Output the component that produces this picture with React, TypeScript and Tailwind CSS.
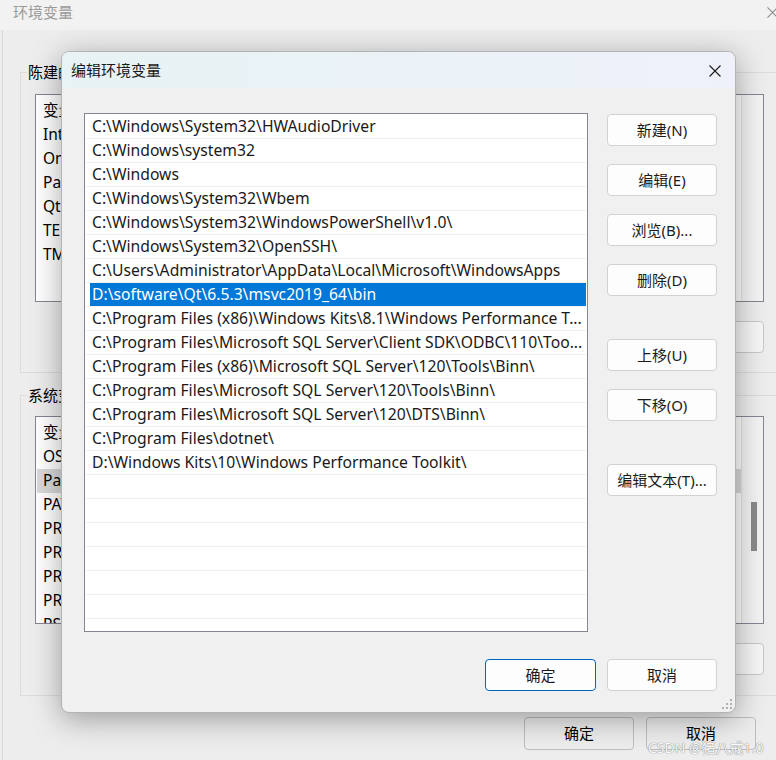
import React from "react";

const FONT = "font-['Noto_Sans','Noto_Sans_CJK_SC',sans-serif]";

const paths = [
  "C:\\Windows\\System32\\HWAudioDriver",
  "C:\\Windows\\system32",
  "C:\\Windows",
  "C:\\Windows\\System32\\Wbem",
  "C:\\Windows\\System32\\WindowsPowerShell\\v1.0\\",
  "C:\\Windows\\System32\\OpenSSH\\",
  "C:\\Users\\Administrator\\AppData\\Local\\Microsoft\\WindowsApps",
  "D:\\software\\Qt\\6.5.3\\msvc2019_64\\bin",
  "C:\\Program Files (x86)\\Windows Kits\\8.1\\Windows Performance T...",
  "C:\\Program Files\\Microsoft SQL Server\\Client SDK\\ODBC\\110\\Too...",
  "C:\\Program Files (x86)\\Microsoft SQL Server\\120\\Tools\\Binn\\",
  "C:\\Program Files\\Microsoft SQL Server\\120\\Tools\\Binn\\",
  "C:\\Program Files\\Microsoft SQL Server\\120\\DTS\\Binn\\",
  "C:\\Program Files\\dotnet\\",
  "D:\\Windows Kits\\10\\Windows Performance Toolkit\\",
];

function BgList({
  items,
  selected,
  thumb,
}: {
  items: string[];
  selected?: number;
  thumb?: boolean;
}) {
  return (
    <div className="h-[208px] border border-[#828790] bg-white flex overflow-hidden">
      <div className="flex-1 pt-[4px] overflow-hidden">
        <div className="h-[24px] flex items-center pl-[7px] text-[15.5px] text-black">
          <span className="w-[200px]">变量</span>
          <span>值</span>
        </div>
        {items.map((it, i) => (
          <div
            key={i}
            className={
              "h-[24px] flex items-center pl-[5px] ml-[1px] text-[15.5px] text-black whitespace-nowrap " +
              (selected === i ? "bg-[#d9d9d9]" : "")
            }
          >
            <span className="w-[200px] pl-[1px]">{it}</span>
          </div>
        ))}
      </div>
      <div className="w-[22px] border-l border-[#e3e3e3] bg-[#f3f3f3] flex justify-center pl-[2px]">
        {thumb ? <div className="mt-[85px] w-[6px] h-[49px] bg-[#8a8a8a]" /> : null}
      </div>
    </div>
  );
}

function BgButtons() {
  return (
    <div className="flex justify-end gap-[11px] mt-[19px]">
      <div className="w-[110px] h-[32px] border border-[#c8c8c8] rounded-[4px] bg-[#f6f6f6]" />
      <div className="w-[110px] h-[32px] border border-[#c8c8c8] rounded-[4px] bg-[#f6f6f6]" />
      <div className="w-[110px] h-[32px] border border-[#c8c8c8] rounded-[4px] bg-[#f6f6f6]" />
    </div>
  );
}

function CloseIcon({ color, size }: { color: string; size: number }) {
  return (
    <svg width={size} height={size} viewBox="0 0 12 12">
      <path d="M0.5 0.5 L11.5 11.5 M11.5 0.5 L0.5 11.5" stroke={color} strokeWidth="1.1" fill="none" />
    </svg>
  );
}

function Btn({
  label,
  className = "",
  primary = false,
}: {
  label: string;
  className?: string;
  primary?: boolean;
}) {
  return (
    <div
      className={
        "h-[32px] w-[110px] flex items-center justify-center rounded-[4px] bg-[#fdfdfd] text-[15px] text-[#1b1b1b] border " +
        (primary ? "border-[#0067c0]" : "border-[#d2d2d2]") +
        " " +
        className
      }
    >
      {label}
    </div>
  );
}

export default function App() {
  const emptyRows = Array.from({ length: 8 });
  return (
    <div className={"relative w-[776px] h-[760px] overflow-hidden bg-[#ededed] " + FONT}>
      {/* Background window: 环境变量 */}
      <div className="w-[800px] h-[760px] flex flex-col">
        <div className="h-[30px] flex items-center justify-between pl-[13px] pr-[22px] bg-[#f2f2f2] text-[15px] text-[#9a9a9a]">
          <span className="-mt-[5px]">环境变量</span>
          <span className="-mt-[5px]">
            <CloseIcon color="#8a8a8a" size={11} />
          </span>
        </div>
        <div className="flex-1 ml-[2px] border-l border-[#d8d8d8] pl-[17px] pt-[32px]">
          <fieldset className="w-[759px] h-[311px] border border-[#dcdcdc] px-[14px]">
            <legend className="-ml-[8px] px-[1px] text-[15px] leading-[20px] text-black">
              陈建的用户变量(U)
            </legend>
            <div className="mt-[12px]">
              <BgList items={["IntelliJ IDEA", "OneDrive", "Path", "Qt", "TEMP", "TMP"]} />
            </div>
            <BgButtons />
          </fieldset>
          <fieldset className="mt-[12px] w-[759px] h-[311px] border border-[#dcdcdc] px-[14px]">
            <legend className="-ml-[8px] px-[1px] text-[15px] leading-[20px] text-black">
              系统变量(S)
            </legend>
            <div className="mt-[11px]">
              <BgList
                items={[
                  "OS",
                  "Path",
                  "PATHEXT",
                  "PROCESSOR_ARCHITECTURE",
                  "PROCESSOR_IDENTIFIER",
                  "PROCESSOR_LEVEL",
                  "PROCESSOR_REVISION",
                  "PSModulePath",
                ]}
                selected={1}
                thumb
              />
            </div>
            <BgButtons />
          </fieldset>
          <div className="flex gap-[12px] mt-[21px] pl-[504px]">
            <div className="w-[110px] h-[33px] border border-[#bdbdbd] rounded-[4px] flex items-center justify-center text-[15px] text-black">
              确定
            </div>
            <div className="w-[110px] h-[33px] border border-[#bdbdbd] rounded-[4px] flex items-center justify-center text-[15px] text-black">
              取消
            </div>
          </div>
        </div>
      </div>

      {/* Edit dialog */}
      <div className="absolute left-[61px] top-[51px] w-[675px] h-[662px] rounded-[8px] border border-[#b4b4b4] bg-[#f0f0f0] overflow-hidden shadow-[0_6px_30px_rgba(0,0,0,0.35)]">
        <div className="h-[36px] flex items-center justify-between pl-[9px] pr-[14px] bg-gradient-to-r from-[#e7f3f4] to-[#eef1fa]">
          <span className="text-[15px] text-[#1a1a1a] mt-[1px]">编辑环境变量</span>
          <span className="mt-[1px]">
            <CloseIcon color="#1a1a1a" size={12} />
          </span>
        </div>
        <div className="flex flex-col pl-[22px] pr-[18px] pt-[25px]">
          <div className="flex gap-[19px]">
            <div className="w-[504px] h-[519px] border border-[#828790] bg-white pt-[1px] px-[1px] overflow-hidden">
              {paths.map((p, i) => (
                <div key={i} className="h-[24px] border-b border-[#f0f0f0] pl-[4px]">
                  <div
                    className={
                      "h-[23px] pl-[2px] pt-[1px] flex items-center text-[15.7px] whitespace-nowrap overflow-hidden " +
                      (i === 7 ? "bg-[#0078d7] text-white" : "text-[#1a1a1a]")
                    }
                  >
                    {p}
                  </div>
                </div>
              ))}
              {emptyRows.map((_, i) => (
                <div key={"e" + i} className="h-[24px] border-b border-[#f0f0f0]" />
              ))}
            </div>
            <div className="flex flex-col w-[110px] pt-[1px]">
              <Btn label="新建(N)" />
              <Btn label="编辑(E)" className="mt-[18px]" />
              <Btn label="浏览(B)..." className="mt-[18px]" />
              <Btn label="删除(D)" className="mt-[18px]" />
              <Btn label="上移(U)" className="mt-[43px]" />
              <Btn label="下移(O)" className="mt-[18px]" />
              <Btn label="编辑文本(T)..." className="mt-[43px]" />
            </div>
          </div>
          <div className="flex justify-end gap-[11px] mt-[27px]">
            <Btn label="确定" primary className="w-[111px]" />
            <Btn label="取消" />
          </div>
        </div>
        <svg className="absolute right-[2px] bottom-[2px]" width="12" height="12" viewBox="0 0 12 12">
          <rect x="9" y="1" width="2" height="2" fill="#b0b0b0" />
          <rect x="5" y="5" width="2" height="2" fill="#b0b0b0" />
          <rect x="9" y="5" width="2" height="2" fill="#b0b0b0" />
          <rect x="1" y="9" width="2" height="2" fill="#b0b0b0" />
          <rect x="5" y="9" width="2" height="2" fill="#b0b0b0" />
          <rect x="9" y="9" width="2" height="2" fill="#b0b0b0" />
        </svg>
      </div>

      {/* watermark */}
      <div className="absolute left-[648px] top-[737px] text-[14px] text-[#fafafa] whitespace-nowrap [text-shadow:0_0_1px_#8a8a8a,0_0_1px_#8a8a8a]">
        CSDN @猪八戒1.0
      </div>
    </div>
  );
}
